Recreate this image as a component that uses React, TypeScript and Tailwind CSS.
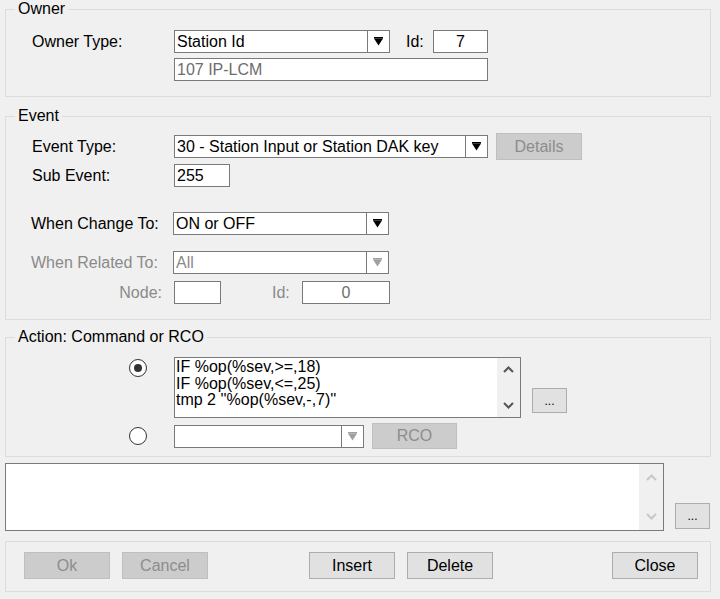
import React from "react";

const Arrow = ({ disabled }: { disabled?: boolean }) => (
  <svg width="11" height="9" viewBox="0 0 11 9">
    <rect x="1" y="0" width="9" height="1.5" fill={disabled ? "#a0a0a0" : "#000"} />
    <polygon points="1,1.5 10,1.5 5.5,8.5" fill={disabled ? "#a0a0a0" : "#000"} />
  </svg>
);

const Combo = ({
  text,
  w,
  disabled,
}: {
  text: string;
  w: string;
  disabled?: boolean;
}) => (
  <div className={`${w} h-[23px] flex border border-[#7a7a7a] bg-white`}>
    <span
      className={`flex-1 flex items-center pl-[2px] whitespace-nowrap overflow-hidden ${
        disabled ? "text-[#8a8a8a]" : "text-black"
      }`}
    >
      {text}
    </span>
    <span className="w-[22px] flex items-center justify-center border-l border-[#7a7a7a]">
      <Arrow disabled={disabled} />
    </span>
  </div>
);

const Chevron = ({ up, color }: { up?: boolean; color: string }) => (
  <svg width="11" height="7" viewBox="0 0 11 7">
    <polyline
      points={up ? "1,6 5.5,1.5 10,6" : "1,1 5.5,5.5 10,1"}
      fill="none"
      stroke={color}
      strokeWidth="2"
    />
  </svg>
);

const Btn = ({
  children,
  w,
  h,
  disabled,
  cls = "",
}: {
  children: React.ReactNode;
  w: string;
  h: string;
  disabled?: boolean;
  cls?: string;
}) => (
  <div
    className={`${w} ${h} ${cls} flex items-center justify-center border ${
      disabled
        ? "bg-[#cccccc] border-[#bfbfbf] text-[#8d8d8d]"
        : "bg-[#e1e1e1] border-[#adadad] text-black"
    }`}
  >
    {children}
  </div>
);

export default function App() {
  return (
    <div
      className="w-[720px] h-[599px] bg-[#f0f0f0] text-[16px] leading-[18px] text-black overflow-hidden"
      style={{ fontFamily: '"Liberation Sans", Arial, sans-serif' }}
    >
      {/* Owner */}
      <fieldset className="ml-[5px] w-[706px] border border-[#dcdcdc] pb-[15px]">
        <legend className="ml-[9px] px-[3px] leading-[18px]">Owner</legend>
        <div className="pl-[26px]">
          <div className="mt-[12px] flex items-center">
            <span className="w-[142px]">Owner Type:</span>
            <Combo text="Station Id" w="w-[216px]" />
            <span className="ml-[16px] w-[27px]">Id:</span>
            <div className="w-[55px] h-[23px] border border-[#7a7a7a] bg-white flex items-center justify-center">
              7
            </div>
          </div>
          <div className="mt-[5px] flex">
            <div className="ml-[142px] w-[314px] h-[23px] border border-[#7a7a7a] bg-white flex items-center pl-[2px] text-[#6d6d6d]">
              107 IP-LCM
            </div>
          </div>
        </div>
      </fieldset>

      {/* Event */}
      <fieldset className="mt-[10px] ml-[5px] w-[706px] border border-[#dcdcdc] pb-[15px]">
        <legend className="ml-[9px] px-[3px] leading-[18px]">Event</legend>
        <div className="pl-[26px]">
          <div className="mt-[8px] h-[27px] flex items-center">
            <span className="w-[142px]">Event Type:</span>
            <Combo text="30 - Station Input or Station DAK key" w="w-[314px]" />
            <Btn w="w-[86px]" h="h-[27px]" disabled cls="ml-[8px]">
              Details
            </Btn>
          </div>
          <div className="mt-[4px] flex items-center">
            <span className="w-[142px]">Sub Event:</span>
            <div className="w-[56px] h-[23px] border border-[#7a7a7a] bg-white flex items-center pl-[2px]">
              255
            </div>
          </div>
          <div className="mt-[25px] flex items-center">
            <span className="w-[142px] -ml-[1px] pr-[1px]">When Change To:</span>
            <Combo text="ON or OFF" w="w-[216px]" />
          </div>
          <div className="mt-[16px] flex items-center">
            <span className="w-[142px] -ml-[1px] pr-[1px] text-[#8a8a8a]">When Related To:</span>
            <Combo text="All" w="w-[216px]" disabled />
          </div>
          <div className="mt-[7px] flex items-center">
            <span className="w-[142px] pr-[12px] text-right text-[#8a8a8a]">Node:</span>
            <div className="w-[47px] h-[23px] border border-[#7a7a7a] bg-white" />
            <span className="ml-[51px] w-[30px] text-[#8a8a8a]">Id:</span>
            <div className="w-[88px] h-[23px] border border-[#7a7a7a] bg-white flex items-center justify-center text-[#6d6d6d]">
              0
            </div>
          </div>
        </div>
      </fieldset>

      {/* Action */}
      <fieldset className="mt-[8px] ml-[5px] w-[706px] border border-[#dcdcdc] pb-[7px]">
        <legend className="ml-[9px] px-[3px] leading-[18px]">Action: Command or RCO</legend>
        <div className="mt-[11px] flex items-start">
          <div className="w-[168px] pl-[123px] pt-[2px]">
            <div className="w-[18px] h-[18px] rounded-full border border-[#333333] bg-white flex items-center justify-center">
              <div className="w-[8px] h-[8px] rounded-full bg-[#333333]" />
            </div>
          </div>
          <div className="w-[347px] h-[61px] border border-[#7a7a7a] bg-white flex">
            <div className="flex-1 pl-[1px] pt-[1px] leading-[16.5px] whitespace-pre">
              {"IF %op(%sev,>=,18)\nIF %op(%sev,<=,25)\ntmp 2 ''%op(%sev,-,7)''"}
            </div>
            <div className="w-[23px] bg-[#f0f0f0] flex flex-col items-center justify-between py-[8px]">
              <Chevron up color="#555555" />
              <Chevron color="#555555" />
            </div>
          </div>
          <Btn w="w-[35px]" h="h-[25px]" cls="ml-[11px] self-end mb-[5px] text-[12px]">
            ...
          </Btn>
        </div>
        <div className="mt-[5px] flex items-center">
          <div className="w-[168px] pl-[123px]">
            <div className="w-[18px] h-[18px] rounded-full border border-[#333333] bg-white" />
          </div>
          <Combo text="" w="w-[190px]" disabled />
          <Btn w="w-[85px]" h="h-[26px]" disabled cls="ml-[8px]">
            RCO
          </Btn>
        </div>
      </fieldset>

      {/* Big text area */}
      <div className="mt-[6px] ml-[5px] flex items-end">
        <div className="w-[659px] h-[68px] border border-[#7a7a7a] bg-white flex justify-end">
          <div className="w-[24px] bg-[#f0f0f0] flex flex-col items-center justify-between py-[10px]">
            <Chevron up color="#c8c8c8" />
            <Chevron color="#c8c8c8" />
          </div>
        </div>
        <Btn w="w-[35px]" h="h-[26px]" cls="ml-[11px] mb-[2px] text-[12px]">
          ...
        </Btn>
      </div>

      {/* Bottom buttons */}
      <div className="mt-[10px] ml-[5px] w-[706px] h-[51px] border border-[#dcdcdc] flex pl-[18px] pt-[10px]">
        <Btn w="w-[86px]" h="h-[27px]" disabled>
          Ok
        </Btn>
        <Btn w="w-[86px]" h="h-[27px]" disabled cls="ml-[12px]">
          Cancel
        </Btn>
        <Btn w="w-[86px]" h="h-[27px]" cls="ml-[101px]">
          Insert
        </Btn>
        <Btn w="w-[86px]" h="h-[27px]" cls="ml-[12px]">
          Delete
        </Btn>
        <Btn w="w-[86px]" h="h-[27px]" cls="ml-[119px]">
          Close
        </Btn>
      </div>
    </div>
  );
}
